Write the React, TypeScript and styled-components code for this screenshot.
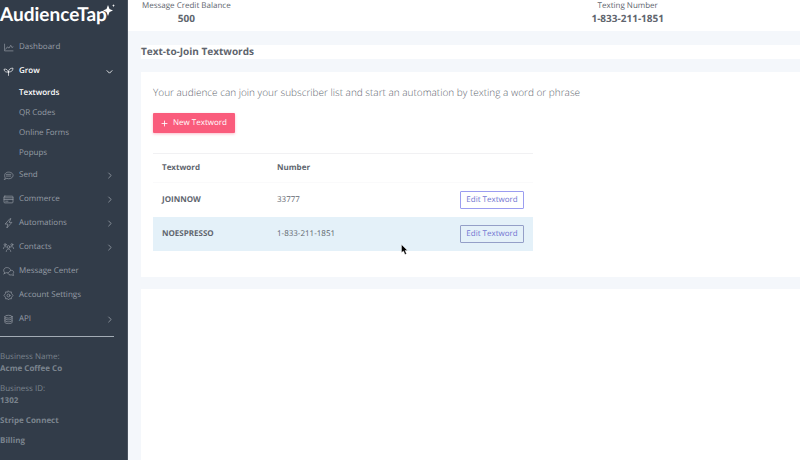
import React from "react";
import styled, { createGlobalStyle } from "styled-components";

const Global = createGlobalStyle`
  *, *::before, *::after { box-sizing: border-box; }
  html, body, #root { height: 100%; }
  body { margin: 0; background: #ffffff; color: #60656e; font-family: "Open Sans", sans-serif; font-size: 8px; line-height: 12px; text-rendering: geometricPrecision; }
  button { font-family: inherit; cursor: pointer; text-rendering: inherit; }
`;

const Page = styled.div`
  position: relative;
  display: grid;
  grid-template-columns: 128px minmax(0, 1fr);
  min-height: 100%;
`;

const Sidebar = styled.aside`
  background: #323c49;
  border-right: 1px solid #4a535f;
  color: #969da6;
`;

const Logo = styled.a`
  display: flex;
  align-items: flex-start;
  height: 35px;
  color: #ffffff;
  text-decoration: none;
  font: 700 19px/30px Lato, sans-serif;
`;

const LogoStar = styled.svg`
  flex: none;
  width: 12px;
  height: 12px;
  margin: 4px 0 0 -4px;
`;

const NavList = styled.ul`
  list-style: none;
  margin: 0;
  padding: 0;
`;

const NavLink = styled.a<{ $active?: boolean }>`
  display: grid;
  grid-template-columns: 9px 1fr 6px;
  column-gap: 6px;
  align-items: center;
  height: 24px;
  padding: 0 14px 0 4px;
  color: ${(p) => (p.$active ? "#ffffff" : "#969da6")};
  font-weight: ${(p) => (p.$active ? 600 : 400)};
  text-decoration: none;
`;

const SubLink = styled.a<{ $active?: boolean }>`
  display: flex;
  align-items: center;
  height: 20px;
  padding-left: 19px;
  color: ${(p) => (p.$active ? "#ffffff" : "#969da6")};
  font-weight: ${(p) => (p.$active ? 600 : 400)};
  text-decoration: none;
`;

const Icon = styled.svg`
  display: block;
  width: 9px;
  height: 9px;
  overflow: visible;
  fill: none;
  stroke: currentColor;
  stroke-width: 1.2;
  stroke-linecap: round;
  stroke-linejoin: round;
`;

const Chevron = styled(Icon)`
  width: 5px;
  height: 5px;
  stroke-width: 1;
`;

const Rule = styled.hr`
  height: 1px;
  margin: 5px 13px 14px 0;
  border: 0;
  background: #a3acb5;
`;

const Account = styled.div`
  display: grid;
  row-gap: 8px;
  color: #7b848e;
`;

const Facts = styled.dl`
  display: grid;
  row-gap: 8px;
  margin: 0;
  dt, dd { margin: 0; }
  dd { font-weight: 700; }
`;

const AccountLink = styled.a`
  color: inherit;
  font-weight: 700;
  text-decoration: none;
`;

const Main = styled.main`
  display: flex;
  flex-direction: column;
  min-width: 0;
`;

const Stats = styled.header`
  display: flex;
  justify-content: space-between;
  height: 31px;
  padding: 0 136px 0 14px;
  text-align: center;
`;

const Stat = styled.dl`
  margin: 0;
  dt { line-height: 12px; }
  dd { margin: 0; font-size: 10px; line-height: 12px; font-weight: 700; }
`;

const Content = styled.section`
  display: flex;
  flex-direction: column;
  flex: 1;
  padding: 14px 0 0 13px;
  background: #f4f7fb;
`;

const Title = styled.h1`
  margin: 0 0 13px;
  padding-bottom: 2px;
  background: #ffffff;
  font-size: 10px;
  line-height: 12px;
  font-weight: 700;
`;

const Card = styled.div`
  display: flex;
  flex-direction: column;
  align-items: flex-start;
  padding: 12px 12px 26px;
  background: #ffffff;
`;

const Blank = styled.div`
  flex: 1;
  margin-top: 12px;
  background: #ffffff;
`;

const Intro = styled.p`
  margin: 0 0 13px;
  font-size: 10px;
  line-height: 16px;
  font-weight: 300;
`;

const NewButton = styled.button`
  display: inline-flex;
  align-items: center;
  gap: 6px;
  height: 20px;
  margin-bottom: 20px;
  padding: 0 8px 0 9px;
  border: 0;
  border-radius: 1px;
  background: #fa5c7c;
  box-shadow: 0 1px 3px rgba(250, 92, 124, 0.4);
  color: #ffffff;
  font-size: 8px;
  line-height: 12px;
`;

const Table = styled.table`
  width: 380px;
  max-width: 100%;
  table-layout: fixed;
  border-collapse: collapse;
  font-size: 8px;
  text-align: left;
  th, td { padding: 0 9px; }
  th { font-weight: 700; }
  th:first-child { width: 115px; }
  td:last-child { text-align: right; }
  thead tr { height: 29px; border-top: 1px solid #f1f1f3; border-bottom: 1px solid #fafafb; }
`;

const Row = styled.tr<{ $hover?: boolean }>`
  height: 34px;
  background: ${(p) => (p.$hover ? "#e4f1f9" : "#ffffff")};
`;

const EditButton = styled.button<{ $hover?: boolean }>`
  height: 18px;
  width: 64px;
  padding: 0;
  border: 1px solid ${(p) => (p.$hover ? "#949fc8" : "#9b9df0")};
  border-radius: 1px;
  background: transparent;
  color: #7276d2;
  font-size: 8px;
  line-height: 12px;
  white-space: nowrap;
`;

const Cursor = styled.svg`
  position: absolute;
  left: 401px;
  top: 244px;
  width: 7px;
  height: 11px;
`;

const icons: Record<string, React.ReactNode> = {
  Dashboard: <path d="M1 2v12h15M3 11l3-4 3 2 3-5 2 4 2-1" />,
  Grow: <path d="M8 15V8M8 9C7 5 4 3 0 4c0 4 4 6 8 5M8 9c0-5 3-7 8-7 0 5-3 7-8 7" />,
  Send: <><path d="M2 12C-1 6 3 2 8 2s9 3 8 7-7 6-11 4l-4 2z" /><path d="M4 6h8M4 9h8" /></>,
  Commerce: <><rect x="0" y="2" width="16" height="12" rx="1.5" /><path d="M0 5h16M0 8h16M3 11h4" /></>,
  Automations: <path d="M10 0 2 9h5l-2 7 9-10H9l3-6z" />,
  Contacts: <><circle cx="8" cy="7" r="2.4" /><circle cx="2" cy="3" r="1.8" /><circle cx="14" cy="3" r="1.8" /><path d="M4 15c0-6 8-6 8 0M-1 10c0-4 3-4 5-3M17 10c0-4-3-4-5-3" /></>,
  "Message Center": <><path d="M1 10C-3 5 1 1 5 1s8 3 6 6-5 4-7 3l-4 2z" /><path d="M12 6c4-1 7 3 4 6l1 3-4-1c-3 1-6-1-6-3" /></>,
  "Account Settings": <><path d="m8 0 2 2 3-.5.5 3L16 8l-2.500 3-.5 3-3-.5L8 16l-2-2.500L3 14l-.5-3L0 8l2.500-3.500.5-3L6 2z" /><circle cx="8" cy="8" r="2.600" /></>,
  API: <><ellipse cx="8" cy="3" rx="6.500" ry="2.500" /><path d="M1.500 3v10c0 3 13 3 13 0V3M1.500 6.500c0 3 13 3 13 0M1.500 10c0 3 13 3 13 0" /></>,
};

type Item = { label: string; more?: boolean; children?: string[] };

const items: Item[] = [
  { label: "Dashboard" },
  { label: "Grow", more: true, children: ["Textwords", "QR Codes", "Online Forms", "Popups"] },
  { label: "Send", more: true },
  { label: "Commerce", more: true },
  { label: "Automations", more: true },
  { label: "Contacts", more: true },
  { label: "Message Center" },
  { label: "Account Settings" },
  { label: "API", more: true },
];

const rows = [
  { word: "JOINNOW", number: "33777", hover: false },
  { word: "NOESPRESSO", number: "1-833-211-1851", hover: true },
];

export default function App() {
  return (
    <>
      <Global />
      <Page>
        <Sidebar>
          <Logo href="#">
            AudienceTap
            <LogoStar viewBox="0 0 12 12" fill="currentColor" aria-hidden="true">
              <path d="M5 1 6.500 5 10 6.500 6.500 8 5 12 3.500 8 0 6.500 3.500 5zM10.500 0l.4 1.200 1.100.4-1.100.4-.4 1.200-.4-1.200L9 1.600l1.100-.4z" />
            </LogoStar>
          </Logo>
          <nav aria-label="Primary">
            <NavList>
              {items.map((item) => (
                <li key={item.label}>
                  <NavLink href="#" $active={!!item.children}>
                    <Icon viewBox="0 0 16 16" aria-hidden="true">{icons[item.label]}</Icon>
                    <span>{item.label}</span>
                    {item.more && (
                      <Chevron viewBox="0 0 6 6" aria-hidden="true">
                        <path d={item.children ? "M0 2l3 3 3-3" : "M2 0l3 3-3 3"} />
                      </Chevron>
                    )}
                  </NavLink>
                  {item.children && (
                    <NavList>
                      {item.children.map((child, i) => (
                        <li key={child}>
                          <SubLink href="#" $active={i === 0}>{child}</SubLink>
                        </li>
                      ))}
                    </NavList>
                  )}
                </li>
              ))}
            </NavList>
          </nav>
          <Rule />
          <Account>
            <Facts>
              <div>
                <dt>Business Name:</dt>
                <dd>Acme Coffee Co</dd>
              </div>
              <div>
                <dt>Business ID:</dt>
                <dd>1302</dd>
              </div>
            </Facts>
            <AccountLink href="#">Stripe Connect</AccountLink>
            <AccountLink href="#">Billing</AccountLink>
          </Account>
        </Sidebar>
        <Main>
          <Stats>
            <Stat><dt>Message Credit Balance</dt><dd>500</dd></Stat>
            <Stat><dt>Texting Number</dt><dd>1-833-211-1851</dd></Stat>
          </Stats>
          <Content>
            <Title>Text-to-Join Textwords</Title>
            <Card>
              <Intro>Your audience can join your subscriber list and start an automation by texting a word or phrase</Intro>
              <NewButton type="button">
                <Chevron viewBox="0 0 6 6" aria-hidden="true"><path d="M3 0v6M0 3h6" /></Chevron>
                New Textword
              </NewButton>
              <Table>
                <thead>
                  <tr>
                    <th scope="col">Textword</th>
                    <th scope="col">Number</th>
                    <td />
                  </tr>
                </thead>
                <tbody>
                  {rows.map((row) => (
                    <Row key={row.word} $hover={row.hover}>
                      <th scope="row">{row.word}</th>
                      <td>{row.number}</td>
                      <td><EditButton type="button" $hover={row.hover}>Edit Textword</EditButton></td>
                    </Row>
                  ))}
                </tbody>
              </Table>
            </Card>
            <Blank />
          </Content>
        </Main>
        <Cursor viewBox="0 0 7 11" aria-hidden="true">
          <path d="M.5.5v8l2-1.500 1.500 3.500 1.500-.7L4 6.500h2.500z" fill="#000000" stroke="#ffffff" strokeWidth=".4" />
        </Cursor>
      </Page>
    </>
  );
}
